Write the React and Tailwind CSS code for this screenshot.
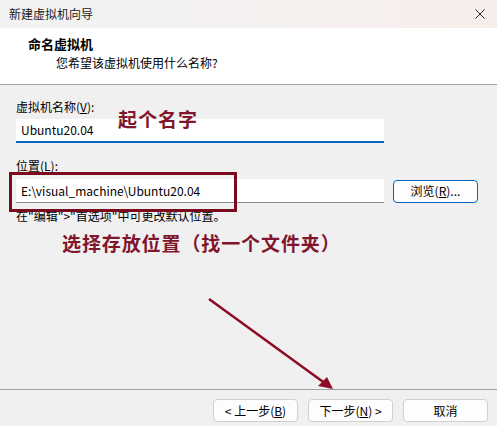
import React from "react";

const ui = { fontFamily: '"Noto Sans CJK SC", "Noto Sans", sans-serif' };

function DialogButton({ children }) {
  return (
    <button className="h-[23px] w-[85px] rounded-[4px] border border-[#d0d0d0] bg-[#fdfdfd] text-[12px] leading-none text-black">
      {children}
    </button>
  );
}

export default function App() {
  return (
    <div className="relative flex h-[426px] w-[497px] flex-col overflow-hidden bg-[#f0f0f0] text-black" style={ui}>
      {/* Title bar */}
      <div className="flex h-[28px] items-center justify-between bg-gradient-to-r from-[#f3f3f3] via-[#f4f1f0] to-[#f7eeeb] pl-[9px] pr-[10px]">
        <span className="text-[12px] leading-none text-[#1a1a1a]">新建虚拟机向导</span>
        <svg width="10" height="10" viewBox="0 0 10 10" className="mr-[2px]">
          <path d="M0.5 0.5 L9.5 9.5 M9.5 0.5 L0.5 9.5" stroke="#222" strokeWidth="1" />
        </svg>
      </div>

      {/* Header */}
      <div className="flex h-[57px] flex-col border-b border-[#a0a0a0] bg-white pl-[28px] pt-[7px]">
        <span className="text-[13px] font-bold leading-[18px]">命名虚拟机</span>
        <span className="ml-[28px] mt-[2px] text-[12px] leading-[16px]">您希望该虚拟机使用什么名称?</span>
      </div>

      {/* Body */}
      <div className="flex flex-1 flex-col pl-[16px] pr-[19px] pt-[14px]">
        <label className="text-[12px] leading-[16px]">
          虚拟机名称(<span className="underline">V</span>):
        </label>
        <div className="mt-[4px] flex h-[24px] w-[368px] items-center border-b-2 border-[#0067c0] bg-white pl-[5px] text-[12px]">
          Ubuntu20.04
        </div>

        <label className="mt-[15px] text-[12px] leading-[16px]">
          位置(<span className="underline">L</span>):
        </label>
        <div className="mt-[5px] flex items-center">
          <div className="flex h-[24px] w-[368px] items-center border-b border-[#8a8a8a] bg-white pl-[5px] text-[12px]">
            E:\visual_machine\Ubuntu20.04
          </div>
          <button className="ml-[9px] h-[23px] w-[85px] rounded-[4px] border border-[#0067c0] bg-[#fdfdfd] text-[12px] leading-none">
            浏览(<span className="underline">R</span>)...
          </button>
        </div>
        <p className="mt-[5px] text-[12px] leading-[16px]">在"编辑"&gt;"首选项"中可更改默认位置。</p>
      </div>

      {/* Footer */}
      <div className="flex h-[37px] items-start justify-end gap-[10px] border-t border-[#a0a0a0] pr-[9px] pt-[9px]">
        <DialogButton>
          &lt; 上一步(<span className="underline">B</span>)
        </DialogButton>
        <DialogButton>
          下一步(<span className="underline">N</span>) &gt;
        </DialogButton>
        <DialogButton>取消</DialogButton>
      </div>

      {/* Annotations drawn on top */}
      <span className="absolute left-[118px] top-[107px] text-[19px] font-bold leading-[24px] tracking-[1px] text-[#80152c]">起个名字</span>
      <div className="pointer-events-none absolute left-[9px] top-[172px] h-[40px] w-[228px] border-[3px] border-[#7a0b1f]" />
      <span className="absolute left-[62px] top-[231px] text-[19px] font-bold leading-[24px] tracking-[0.9px] text-[#80152c]">
        选择存放位置（找一个文件夹）
      </span>
      <svg className="pointer-events-none absolute left-0 top-0" width="497" height="426">
        <line x1="209" y1="299" x2="326" y2="384" stroke="#8b0c24" strokeWidth="2.5" />
        <path d="M333 389 L318 386 L327 377 Z" fill="#8b0c24" />
      </svg>
    </div>
  );
}
